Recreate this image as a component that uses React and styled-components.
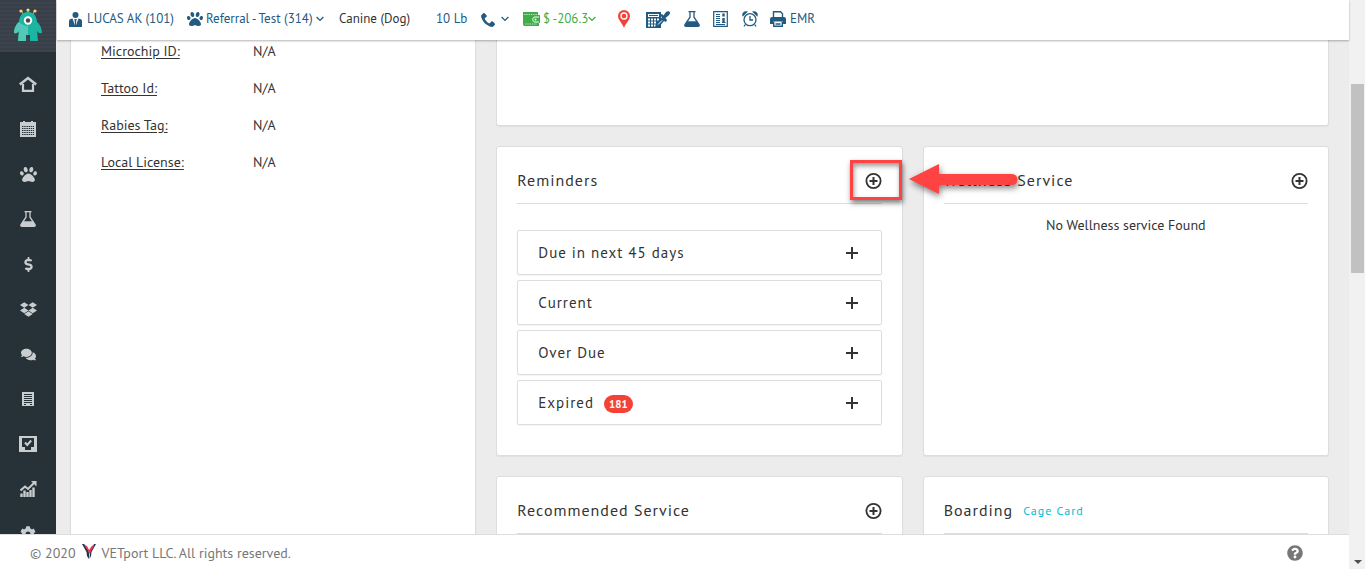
import React from "react";
import styled, { createGlobalStyle } from "styled-components";
import { FaPaw, FaDropbox, FaQuestionCircle, FaDollarSign, FaCog, FaComments } from "react-icons/fa";
import { ImPhone } from "react-icons/im";

const GlobalStyle = createGlobalStyle`
  * { box-sizing: border-box; }
  body {
    margin: 0;
    background: #ececec;
    color: #333;
    font: 14px/20px "PT Sans", Lato, "Noto Sans", sans-serif;
  }
  a { color: inherit; text-decoration: none; }
  button { font: inherit; color: inherit; background: none; border: 0; padding: 0; cursor: pointer; }
  svg { display: block; flex: none; }
`;

const Shell = styled.div`
  display: grid;
  grid-template-columns: minmax(0, 1fr) 16px;
  height: 100vh;
  overflow: hidden;
`;
const Page = styled.div`
  display: grid;
  grid-template-columns: 56px minmax(0, 1fr);
  grid-template-rows: minmax(0, 1fr) 35px;
  min-height: 0;
`;
const Sidebar = styled.nav`
  background: #263238;
  color: #c9cdcf;
  overflow: hidden;
`;
const Brand = styled.a`
  display: flex;
  height: 52px;
  margin-bottom: 10px;
  padding-bottom: 2px;
  align-items: center;
  justify-content: center;
  background: repeating-linear-gradient(0deg, #3c434c 0 2px, #393f49 2px 4px);
`;
const NavLink = styled.a`
  display: flex;
  height: 45px;
  padding-bottom: 1px;
  align-items: center;
  justify-content: center;
`;
const Workspace = styled.div`
  display: flex;
  flex-direction: column;
  min-height: 0;
  min-width: 0;
`;
const Toolbar = styled.header`
  display: grid;
  grid-template-columns: 118px 152px 97px 45px 42px 95px 28px 38px 29px 29px 28px auto;
  justify-content: start;
  align-items: center;
  height: 40px;
  flex: none;
  padding: 0 12px 2px;
  margin-left: 1px;
  background: #fff;
  color: #235a81;
  font-size: 13px;
  white-space: nowrap;
  box-shadow: 0 1px 2px rgba(0, 0, 0, 0.3);
  z-index: 1;
`;
const Tool = styled.a`
  display: flex;
  align-items: center;
  gap: ${(p) => p.$gap || 3}px;
  color: ${(p) => p.$color || "inherit"};
`;
const Amount = styled.span`
  display: flex;
  align-items: center;
`;
const Board = styled.main`
  display: grid;
  flex: 1;
  min-height: 0;
  grid-template-columns: repeat(3, minmax(0, 1fr));
  grid-template-rows: 86px auto minmax(240px, 1fr);
  gap: 0 20px;
  padding: 0 20px 0 14px;
  overflow: hidden;
`;
const Card = styled.section`
  border: 1px solid #ddd;
  border-radius: 3px;
  background: #fff;
  box-shadow: 0 1px 1px rgba(0, 0, 0, 0.05);
`;
const DetailsCard = styled(Card)`
  grid-row: 1 / -1;
  border-width: 0 1px;
  border-radius: 0;
  padding: 1px 30px;
`;
const BannerCard = styled(Card)`
  grid-column: 2 / -1;
  border-top: 0;
  border-radius: 0 0 3px 3px;
`;
const WidgetCard = styled(Card)`
  margin-top: 20px;
  padding: 10px 20px 30px;
`;
const Details = styled.dl`
  display: grid;
  grid-template-columns: 152px 1fr;
  row-gap: 17px;
  margin: 0;
  dt { text-decoration: underline; text-underline-offset: 2px; }
  dd { margin: 0; }
`;
const CardHead = styled.div`
  display: flex;
  align-items: center;
  height: 47px;
  gap: 10px;
  border-bottom: 1px solid #ddd;
`;
const Title = styled.h2`
  margin: 0;
  font-size: 16px;
  font-weight: 400;
  letter-spacing: 1px;
`;
const CageLink = styled.a`
  padding-top: 2px;
  color: #00bcd4;
  font-size: 12px;
  letter-spacing: 1px;
`;
const AddButton = styled.button`
  position: relative;
  margin-left: auto;
  padding-top: 2px;
`;
const Callout = styled.span`
  position: absolute;
  inset: -11px -20px;
  left: -15px;
  border: 3px solid #ff4343;
  box-shadow: 1px 3px 5px rgba(0, 0, 0, 0.5), inset 1px 3px 5px rgba(0, 0, 0, 0.4);
`;
const Arrow = styled.svg`
  position: absolute;
  left: 56px;
  top: 1px;
  z-index: 2;
  overflow: visible;
  filter: drop-shadow(1px 3px 3px rgba(0, 0, 0, 0.5));
`;
const Accordion = styled.div`
  display: grid;
  gap: 5px;
  margin-top: 26px;
`;
const AccordionRow = styled.button`
  display: flex;
  align-items: center;
  height: 45px;
  padding: 0 23px 0 20px;
  border: 1px solid #ddd;
  border-radius: 2px;
  font-size: 15px;
  letter-spacing: 1px;
  box-shadow: 0 1px 1px rgba(0, 0, 0, 0.05);
  svg { margin-left: auto; }
`;
const Badge = styled.span`
  margin: 2px 0 0 10px;
  padding: 0 5px;
  border-radius: 9px;
  background: #f44336;
  color: #fff;
  font-size: 11px;
  font-weight: 700;
  line-height: 18px;
  letter-spacing: 0;
`;
const Empty = styled.p`
  margin: 11px 0 0;
  text-align: center;
`;
const Footer = styled.footer`
  grid-column: 1 / -1;
  display: flex;
  align-items: center;
  gap: 6px;
  padding: 2px 46px 0 30px;
  border-top: 1px solid #ddd;
  background: #fff;
  color: #777;
`;
const Help = styled.button`
  margin-left: auto;
`;
const ScrollTrack = styled.div`
  display: flex;
  flex-direction: column;
  align-items: center;
  background: #f1f1f1;
  padding: 84px 1px 4px 2px;
`;
const ScrollThumb = styled.div`
  width: 100%;
  height: 40%;
  max-height: 189px;
  background: #c1c1c1;
`;
const ScrollArrow = styled.svg`
  margin-top: auto;
`;

const Chevron = () => (
  <svg width="8" height="6" viewBox="0 0 8 6" fill="none" stroke="currentColor" strokeWidth="1.3">
    <path d="M.6 1 4 4.4 7.4 1" />
  </svg>
);
const Plus = () => (
  <svg width="12" height="12" viewBox="0 0 12 12" fill="currentColor">
    <path d="M5 0h2v5h5v2H7v5H5V7H0V5h5z" />
  </svg>
);
const PlusCircle = () => (
  <svg width="17" height="16" viewBox="0 0 17 16" fill="none" stroke="currentColor">
    <circle cx="8.5" cy="8" r="7.1" strokeWidth="1.8" />
    <path d="M8.5 4v8M4.5 8h8" strokeWidth="2" />
  </svg>
);
const Flask = () => (
  <svg width="16" height="16" viewBox="0 0 16 16">
    <path d="M4.500.7h7M6 1v5.200L1 13.600c-.5 1 0 1.700 1 1.700h12c1 0 1.500-.7 1-1.700L10 6.200V1" fill="none" stroke="currentColor" strokeWidth="1.300" />
    <path d="M3.300 10.200h9.400l2.300 3.600c.4.900 0 1.500-1 1.500H2c-1 0-1.400-.6-1-1.500z" fill="currentColor" />
  </svg>
);
const Monster = () => (
  <svg width="30" height="34" viewBox="0 0 30 34">
    <path d="M10 6 8.500 3M15 5V2M20 6l1.500-3" stroke="#b9b58a" strokeWidth="1" />
    <g fill="#f3da7c"><circle cx="8" cy="3" r="1.600" /><circle cx="15" cy="2" r="1.600" /><circle cx="22" cy="3" r="1.600" /></g>
    <path d="M15 4C9 4 6.500 8 6 14c-2.500 2-5 6-5 11 3 1 4-.5 5-2l-1 10h8v-6h4v6h8l-1-10c1 1.500 2 3 5 2 0-5-2.500-9-5-11-.5-6-3-10-9-10z" fill="#1cb5a2" />
    <path d="M6 14c-2.500 2-5 6-5 11 3 1 4-.5 5-2l-1 10h8v-6h2v-9c-4 0-7-2-9-4z" fill="#52c9b8" />
    <circle cx="15" cy="12.500" r="4.200" fill="#fff" /><circle cx="15" cy="12.500" r="2.200" fill="#444a52" />
  </svg>
);
const Home = () => (
  <svg width="18" height="16" viewBox="0 0 18 16" fill="none" stroke="currentColor">
    <path d="M.8 8.500 9 2l8.200 6.500" strokeWidth="2.500" />
    <path d="M4 8v6.800h10V8" strokeWidth="2.200" />
  </svg>
);
const Calendar = () => (
  <svg width="16" height="16" viewBox="0 0 16 16">
    <path d="M0 1h3V0h2v1h6V0h2v1h3v15H0z" fill="currentColor" />
    <path d="M2 5.500h12M2 7.500h12M2 9.500h12M2 11.500h12M2 13.500h12" stroke="#263238" strokeDasharray="1.500 .7" />
  </svg>
);
const Ledger = () => (
  <svg width="12" height="14" viewBox="0 0 12 14">
    <path d="M0 0h12v14H0z" fill="currentColor" />
    <path d="M2 2.500h8M2 4.500h8M2 6.500h8M2 8.500h8M2 10.500h8M2 12.500h2M8 12.500h2" stroke="#263238" />
  </svg>
);
const Tasks = () => (
  <svg width="18" height="16" viewBox="0 0 18 16">
    <path d="M0 0h18v16H0z" fill="currentColor" />
    <path d="M3 2h12v9h-3v3H6v-3H3z" fill="#263238" />
    <path d="m6 6.500 2.200 2.500 4-4.500" fill="none" stroke="currentColor" strokeWidth="2" />
  </svg>
);
const Growth = () => (
  <svg width="17" height="16" viewBox="0 0 17 16" fill="none" stroke="currentColor">
    <path d="M1.500 16v-3.500M4.500 16V9.500M7.500 16v-5M10.500 16V9M13.500 16V6.500" strokeWidth="2.400" />
    <path d="m.5 9.500 4.500-4L8 8l6-6" strokeWidth="2" />
    <path d="M11 0h5.500v5.500z" fill="currentColor" stroke="none" />
  </svg>
);
const Person = () => (
  <svg width="13" height="15" viewBox="0 0 13 15" fill="currentColor">
    <circle cx="6.500" cy="3" r="3" />
    <path d="M0 15V9q0-1.600 1.600-2L3.500 6.500 6 13.500 5.700 8.500 5.200 7h2.600l-.5 1.500-.3 5L9.500 6.500l1.900.5Q13 7.400 13 9v6z" />
  </svg>
);
const Wallet = () => (
  <svg width="17" height="14" viewBox="0 0 17 14">
    <path d="M0 0h15v3h2v8h-1v3H1L0 12.500z" fill="currentColor" />
    <path d="M1 2.500h13.500M2 12h12" stroke="#fff" strokeWidth=".6" strokeDasharray="1.500 .8" />
    <path d="M16 5h-4c-3 0-3 5 0 5h4" fill="none" stroke="#fff" />
    <circle cx="12.500" cy="7.500" r="1" fill="#fff" />
  </svg>
);
const Pin = () => (
  <svg width="12" height="18" viewBox="0 0 12 18">
    <path d="M6 0a6 6 0 0 0-6 6c0 4 4.500 7.500 6 12 1.500-4.500 6-8 6-12a6 6 0 0 0-6-6z" fill="currentColor" />
    <circle cx="6" cy="6" r="3" fill="none" stroke="#fff" strokeWidth="1.300" />
  </svg>
);
const Estimate = () => (
  <svg width="25" height="17" viewBox="0 0 25 17">
    <path d="M0 1h15v16H0z" fill="currentColor" />
    <path d="M2 3h11v3H2z" fill="#fff" />
    <path d="M3 4h9v1H3z" fill="currentColor" />
    <path d="M2 8.500h11M2 11.500h8M2 14.500h8" stroke="#fff" strokeWidth="2" strokeDasharray="2 1" />
    <path d="m14 4 2-1 1.500 1.500L20 1c2-1.700 4.500-.5 4 1 0 1-.8 2-2 3l-2.500 2L21 9l-1 2-2-1-5 6-4 1 1-5 6-5.500z" fill="currentColor" />
    <path d="m12 13.500 4-4" stroke="#fff" />
  </svg>
);
const News = () => (
  <svg width="15" height="16" viewBox="0 0 15 16" fill="none" stroke="currentColor">
    <path d="M.7.700h13.600v14.600H.7z" strokeWidth="1.200" />
    <path d="M3 3.500h4M3 5.500h4M3 7.500h4M3 9.500h4M3 11.500h4M3 13.500h9" />
    <path d="M10.500 2.500v3M10.500 7v4" strokeWidth="2.400" />
    <path d="M9 11.500h3.500" />
  </svg>
);
const Alarm = () => (
  <svg width="16" height="16" viewBox="0 0 16 16" fill="none" stroke="currentColor" strokeWidth="1.300">
    <circle cx="8" cy="8.700" r="6" />
    <path d="M8 5v4h3M3.300 13.500 2 15.500M12.700 13.500l1.300 2M1 4.500C.5 2.500 2 .8 4.500 1zM15 4.500C15.500 2.500 14 .8 11.500 1z" />
  </svg>
);
const Printer = () => (
  <svg width="16" height="16" viewBox="0 0 16 16">
    <path d="M3.500 6V.700h7l2 2V6" fill="none" stroke="currentColor" strokeWidth="1.400" />
    <path d="M2 6h12q2 0 2 2v5h-3v-2.500H3V13H0V8q0-2 2-2z" fill="currentColor" />
    <path d="M3.700 10.500v4.700h8.600v-4.700M5.500 13h5" fill="none" stroke="currentColor" strokeWidth="1.400" />
  </svg>
);
const VetLogo = () => (
  <svg width="14" height="18" viewBox="0 0 14 18">
    <path d="M0 0h2l1 1 3 4 1 4v6L5 12l-.5-4z" fill="#26304f" />
    <path d="M14 0h-2l-1 2-3 4-.5 9L9 12l.5-4z" fill="#26304f" />
    <path d="m2 1 3 1 1 2 1 2 2-3 2-2 1 1-3 5-1 3-2-3z" fill="#e8384f" />
  </svg>
);

const navItems = [
  ["Home", <Home />],
  ["Calendar", <Calendar />],
  ["Patients", <FaPaw size={17} />],
  ["Lab", <Flask />],
  ["Billing", <FaDollarSign size={15} />],
  ["Inventory", <FaDropbox size={17} />],
  ["Messages", <FaComments size={15} />],
  ["Ledger", <Ledger />],
  ["Tasks", <Tasks />],
  ["Reports", <Growth />],
  ["Settings", <FaCog size={16} />],
];
const ids = ["Microchip ID:", "Tattoo Id:", "Rabies Tag:", "Local License:"];
const reminders = [["Due in next 45 days"], ["Current"], ["Over Due"], ["Expired", 181]];

export default function App() {
  return (
    <>
      <GlobalStyle />
      <Shell>
        <Page>
          <Sidebar>
            <Brand href="#" aria-label="VETport"><Monster /></Brand>
            {navItems.map(([name, icon]) => (
              <NavLink href="#" key={name} aria-label={name}>{icon}</NavLink>
            ))}
          </Sidebar>
          <Workspace>
            <Toolbar>
              <Tool href="#" $gap={5}><Person />LUCAS AK (101)</Tool>
              <Tool href="#"><FaPaw size={16} />Referral - Test (314)<Chevron /></Tool>
              <Tool as="span" $color="#333">Canine (Dog)</Tool>
              <Tool href="#">10 Lb</Tool>
              <Tool href="#" $gap={5} aria-label="Call"><ImPhone size={15} /><Chevron /></Tool>
              <Tool href="#" $color="#3fae49"><Wallet /><Amount>$ -206.3<Chevron /></Amount></Tool>
              <Tool href="#" $color="#f44336" aria-label="Location"><Pin /></Tool>
              <Tool href="#" aria-label="Estimate"><Estimate /></Tool>
              <Tool href="#" aria-label="Lab"><Flask /></Tool>
              <Tool href="#" aria-label="Records"><News /></Tool>
              <Tool href="#" aria-label="Alarm"><Alarm /></Tool>
              <Tool href="#" $gap={4}><Printer />EMR</Tool>
            </Toolbar>
            <Board>
              <DetailsCard>
                <Details>
                  {ids.map((id) => (
                    <React.Fragment key={id}><dt>{id}</dt><dd>N/A</dd></React.Fragment>
                  ))}
                </Details>
              </DetailsCard>
              <BannerCard />
              <WidgetCard>
                <CardHead>
                  <Title>Reminders</Title>
                  <AddButton aria-label="Add reminder">
                    <PlusCircle />
                    <Callout>
                      <Arrow width="109" height="30" viewBox="0 0 109 30">
                        <path d="M0 15 30 0v10h73a5.500 5.500 0 0 1 0 11H30v9z" fill="#ff4343" />
                      </Arrow>
                    </Callout>
                  </AddButton>
                </CardHead>
                <Accordion>
                  {reminders.map(([label, count]) => (
                    <AccordionRow key={label}>
                      {label}
                      {count && <Badge>{count}</Badge>}
                      <Plus />
                    </AccordionRow>
                  ))}
                </Accordion>
              </WidgetCard>
              <WidgetCard>
                <CardHead>
                  <Title>Wellness Service</Title>
                  <AddButton aria-label="Add wellness service"><PlusCircle /></AddButton>
                </CardHead>
                <Empty>No Wellness service Found</Empty>
              </WidgetCard>
              <WidgetCard>
                <CardHead>
                  <Title>Recommended Service</Title>
                  <AddButton aria-label="Add recommended service"><PlusCircle /></AddButton>
                </CardHead>
              </WidgetCard>
              <WidgetCard>
                <CardHead>
                  <Title>Boarding</Title>
                  <CageLink href="#">Cage Card</CageLink>
                </CardHead>
              </WidgetCard>
            </Board>
          </Workspace>
          <Footer>
            © 2020 <VetLogo /> VETport LLC. All rights reserved.
            <Help aria-label="Help"><FaQuestionCircle size={16} /></Help>
          </Footer>
        </Page>
        <ScrollTrack aria-hidden="true">
          <ScrollThumb />
          <ScrollArrow width="8" height="5" viewBox="0 0 8 5"><path d="M0 0h8L4 4z" fill="#505050" /></ScrollArrow>
        </ScrollTrack>
      </Shell>
    </>
  );
}
